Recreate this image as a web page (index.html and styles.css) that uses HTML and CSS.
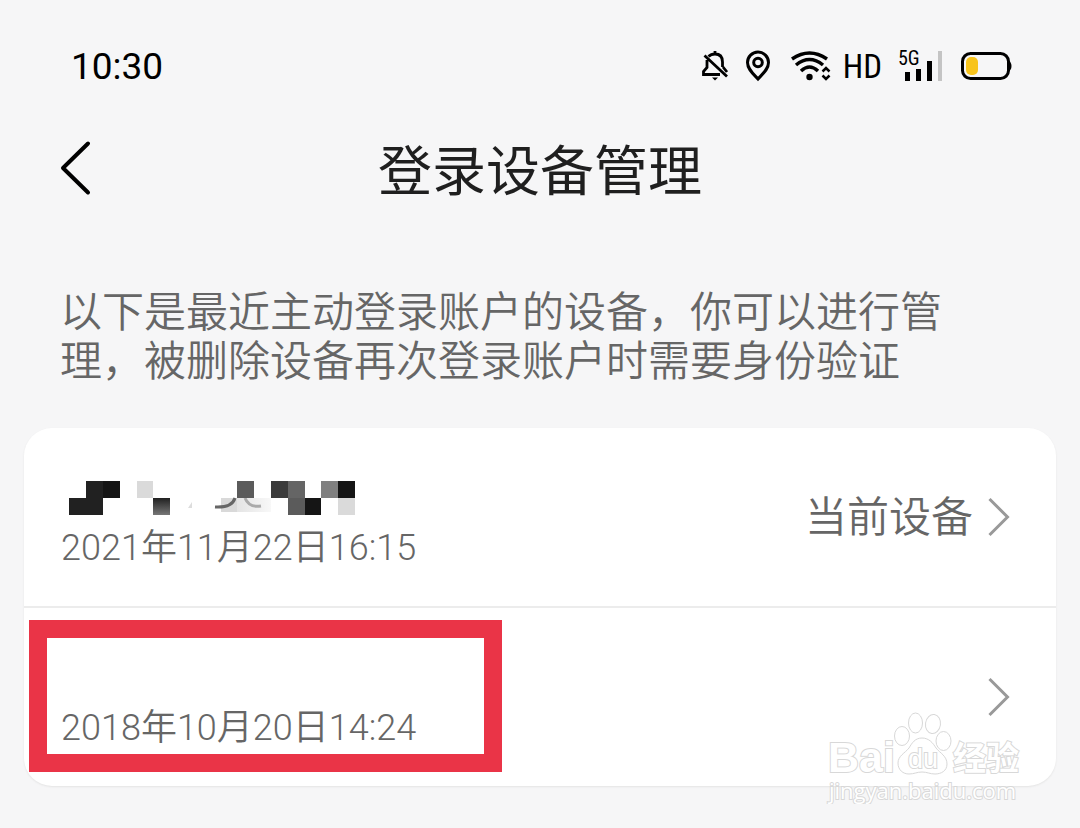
FILE: index.html
```html
<!DOCTYPE html>
<html lang="zh-CN">
<head>
<meta charset="utf-8">
<meta name="viewport" content="width=device-width, initial-scale=1">
<title>登录设备管理</title>
<link rel="stylesheet" href="styles.css">
</head>
<body>
<div class="status">
  <span class="clock">10:30</span>
  <div class="indicators">
    <svg class="bell" width="28" height="32" viewBox="0 0 28 32" fill="none" stroke="#000" stroke-width="2.8">
      <path d="M7.500 6.500Q10 4 14 4Q21.500 4 21.500 12V17M6 10V17.500L2.500 21.500V24.500H19M14 1V4M3.500 5.500L26 26.500M22 17L26 22"/>
      <path d="M11 27.500H17L14 30.500Z" fill="#000" stroke="none"/>
    </svg>
    <svg class="pin" width="26" height="32" viewBox="0 0 26 32" fill="none" stroke="#000" stroke-width="3">
      <path d="M13 29C8 23.500 2.500 19 2.500 12.500A10.500 10.500 0 0 1 23.500 12.500C23.500 19 18 23.500 13 29Z"/>
      <circle cx="13" cy="12.500" r="4.300"/>
    </svg>
    <svg class="wifi" width="40" height="32" viewBox="0 0 40 32" fill="none" stroke="#000" stroke-width="3.500">
      <path d="M1 9Q18.500-3 36 9M5 15Q18.500 4 32 15M10 21Q18.500 13 27 21"/>
      <circle cx="18.500" cy="27" r="3.200" fill="#000" stroke="none"/>
      <path d="M31.500 21.500L35 18L38.500 21.500M31.500 25.500L35 29L38.500 25.500" stroke-width="2.500"/>
    </svg>
    <span class="hd">HD</span>
    <div class="cell">
      <svg width="46" height="32" viewBox="0 0 46 32">
        <path d="M7 22h5v9h-5zM18 19h5v12h-5zM29 11h5v20h-5z"/>
        <path d="M40 1h4v30h-4z" fill="#c4c4c4"/>
      </svg>
      <span class="net">5G</span>
    </div>
    <svg class="battery" width="52" height="32" viewBox="0 0 52 32">
      <rect x="2.500" y="3.500" width="46" height="25" rx="8" fill="none" stroke="#000" stroke-width="3"/>
      <path d="M48 10Q51.500 12 51.500 16T48 22Z"/>
      <rect x="6" y="7" width="12" height="18" rx="5" fill="#f8c41c"/>
    </svg>
  </div>
</div>

<header class="bar">
  <button class="back" type="button" aria-label="返回">
    <svg width="34" height="56" viewBox="0 0 34 56" fill="none" stroke="#000" stroke-width="4" stroke-linecap="round" stroke-linejoin="round"><path d="M28 3.500L3 28L28 52.500"/></svg>
  </button>
  <h1 class="title">登录设备管理</h1>
</header>

<main>
  <p class="note">以下是最近主动登录账户的设备，你可以进行管理，被删除设备再次登录账户时需要身份验证</p>
  <ul class="card">
    <li>
      <button class="row" type="button">
        <span class="device">
          <svg class="name" width="296" height="36" viewBox="0 0 296 36" aria-hidden="true">
            <defs>
              <linearGradient id="fade" x2="0" y2="1"><stop stop-color="#202020"/><stop offset="1" stop-color="#777"/></linearGradient>
              <linearGradient id="soft" x2="1" y2="0"><stop stop-color="#e4e4e4"/><stop offset="1" stop-color="#f8f8f8"/></linearGradient>
            </defs>
            <g fill="#212121"><path d="M25 1h17v17h-17zM8 18h34v17h-34z"/><path d="M42 1h17v17h-17zM244 18h16v17h-16zM277 1h17v17h-17z" fill="#151515"/></g>
            <path d="M76 1h16v17h-16zM277 18h17v17h-17z" fill="#dadada"/>
            <path d="M92 18h17v17h-17z" fill="url(#fade)"/>
            <path d="M127 28l4-6v6z" fill="#ddd"/>
            <path d="M160 18h16v14h-16z" fill="#d9d9d9"/>
            <path d="M176 18h34v14h-34z" fill="url(#soft)"/>
            <path d="M154 27q17 1 20-9" fill="none" stroke="#666" stroke-width="3"/>
            <path d="M184 18q4 10 16 8" fill="none" stroke="#aaa" stroke-width="3"/>
            <path d="M176 1h17v17h-17zM227 18h17v17h-17z" fill="#5b5b5b"/>
            <path d="M210 1h17v17h-17z" fill="#3b3b3b"/>
            <path d="M227 1h17v17h-17z" fill="#656565"/>
            <path d="M260 1h17v17h-17z" fill="#808080"/>
          </svg>
          <span class="date">2021年11月22日16:15</span>
        </span>
        <span class="current">当前设备</span>
        <svg class="arrow" width="24" height="42" viewBox="0 0 24 42"><path d="M2.500 3L20.500 21L2.500 39"/></svg>
      </button>
    </li>
    <li>
      <button class="row" type="button">
        <span class="device framed">
          <span class="name blank"></span>
          <span class="date">2018年10月20日14:24</span>
        </span>
        <svg class="arrow" width="24" height="42" viewBox="0 0 24 42"><path d="M2.500 3L20.500 21L2.500 39"/></svg>
      </button>
      <svg class="mark" width="200" height="96" viewBox="0 0 200 96">
        <text class="mark-latin" x="2" y="64">Bai</text>
        <g class="mark-paw">
          <ellipse cx="76" cy="28" rx="7.500" ry="9.500"/>
          <ellipse cx="89.500" cy="15" rx="7" ry="10"/>
          <ellipse cx="107" cy="16" rx="7.500" ry="9.500" transform="rotate(8 107 16)"/>
          <ellipse cx="117.500" cy="33" rx="7.500" ry="9.500"/>
          <path d="M96 30C103 30 107 35 110 40C114 45 121 48 121 56C121 63 115 66 109 66C104 66 101 64 96 64S88 66 83 66C77 66 72 62 72 55C72 48 79 45 83 40C86 35 89 30 96 30Z"/>
        </g>
        <text class="mark-du" x="82" y="60">du</text>
        <text class="mark-cjk" x="127" y="62">经验</text>
        <text class="mark-url" x="3" y="91">jingyan.baidu.com</text>
      </svg>
    </li>
  </ul>
</main>
</body>
</html>
```

FILE: styles.css
```css
*,
*::before {
  box-sizing: border-box;
}

body {
  margin: 0;
  padding: 40px 24px;
  background: #f6f6f7;
  color: #1f1f1f;
  font-family: Roboto, "Noto Sans CJK SC", sans-serif;
}

button {
  margin: 0;
  padding: 0;
  border: 0;
  background: none;
  color: inherit;
  font: inherit;
  cursor: pointer;
}

svg {
  display: block;
  flex: none;
}

.status {
  display: flex;
  align-items: center;
  justify-content: space-between;
  height: 52px;
  padding: 0 44px 0 47px;
  color: #000;
}

.clock {
  font-size: 37px;
}

.indicators {
  display: flex;
  align-items: center;
}

.pin {
  margin-left: 16px;
}

.wifi {
  margin-left: 20px;
}

.hd {
  margin-left: 12px;
  font: 33px "Roboto Condensed", Roboto, sans-serif;
}

.cell {
  position: relative;
  margin-left: 16px;
}

.net {
  position: absolute;
  top: -2px;
  left: 0;
  font: 20px/20px "Roboto Condensed", Roboto, sans-serif;
}

.battery {
  margin-left: 16px;
}

.bar {
  display: grid;
  grid-template-columns: 1fr auto 1fr;
  align-items: center;
  margin-top: 36px;
  padding: 0 36px;
}

.back {
  justify-self: start;
}

.title {
  margin: 0;
  padding-top: 10px;
  font-size: 54px;
  font-weight: 400;
  line-height: 70px;
}

.note {
  margin: 80px 36px 0;
  color: #666;
  font-family: Roboto, "Noto Sans CJK SC DemiLight", "Noto Sans CJK SC", sans-serif;
  font-size: 42px;
  font-weight: 350;
  line-height: 49px;
}

.card {
  margin: 42px 0 0;
  padding: 0;
  border-radius: 28px;
  background: #fff;
  box-shadow: 0 1px 2px #e4e4e4;
  list-style: none;
}

.card li {
  position: relative;
}

.card li + li {
  border-top: 2px solid #ececec;
}

.row {
  display: flex;
  align-items: center;
  width: 100%;
  height: 178px;
  padding: 0 45px 0 37px;
  color: #666;
  font-family: Roboto, "Noto Sans CJK SC DemiLight", "Noto Sans CJK SC", sans-serif;
  font-weight: 350;
  text-align: left;
}

.device {
  position: relative;
  flex: 1;
  padding-top: 18px;
}

.name {
  height: 36px;
}

.blank {
  display: block;
}

.date {
  display: block;
  margin-top: 8px;
  font-size: 36px;
  line-height: 48px;
}

.framed::before {
  content: "";
  position: absolute;
  top: -22px;
  left: -32px;
  width: 473px;
  height: 152px;
  border: 18px solid #ea3447;
}

.current {
  padding-bottom: 8px;
  font-size: 42px;
}

.arrow {
  margin-left: 14px;
  fill: none;
  stroke: #999;
  stroke-width: 3;
}

.mark {
  position: absolute;
  right: 30px;
  bottom: -18px;
  fill: #fff;
  stroke: #d8d8d8;
  stroke-width: 1;
}

.mark text {
  paint-order: stroke;
  stroke-width: 2;
}

.mark-latin {
  font: bold 43px "Liberation Sans", sans-serif;
}

.mark-du {
  font: 27px "Liberation Sans", sans-serif;
}

.mark-cjk {
  font: bold 33px "Noto Sans CJK SC", sans-serif;
}

.mark-url {
  font: 22px "Open Sans", sans-serif;
}
```
